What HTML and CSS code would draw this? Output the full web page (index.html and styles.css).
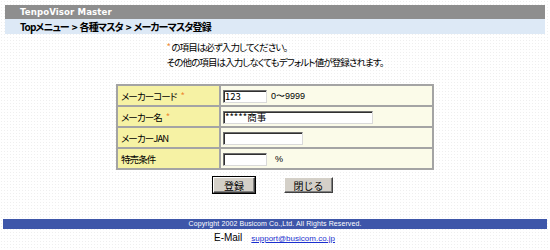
FILE: index.html
```html
<!DOCTYPE html>
<html lang="ja">
<head>
<meta charset="utf-8">
<title>TenpoVisor Master</title>
<link rel="stylesheet" href="styles.css">
</head>
<body>
<div class="page">
  <div class="titlebar">TenpoVisor Master</div>
  <div class="crumbs">Topメニュー &gt; 各種マスタ &gt; メーカーマスタ登録</div>

  <div class="notice">
    <div class="notice-inner">
      <div><span class="req">*</span> の項目は必ず入力してください。</div>
      <div>その他の項目は入力しなくてもデフォルト値が登録されます。</div>
    </div>
  </div>

  <table class="form">
    <tr>
      <th>メーカーコード<span class="req mark">*</span></th>
      <td><input class="in in-s" type="text" value="123"><span class="hint">0〜9999</span></td>
    </tr>
    <tr>
      <th>メーカー名<span class="req mark">*</span></th>
      <td><input class="in in-l" type="text" value="*****商事"></td>
    </tr>
    <tr>
      <th>メーカーJAN</th>
      <td><input class="in in-m" type="text" value=""></td>
    </tr>
    <tr>
      <th>特売条件</th>
      <td><input class="in in-s" type="text" value=""><span class="hint pct">%</span></td>
    </tr>
  </table>

  <div class="buttons">
    <button class="btn btn-default" type="button">登録</button>
    <button class="btn btn-close" type="button">閉じる</button>
  </div>
</div>

<div class="footer">Copyright 2002 Busicom Co.,Ltd. All Rights Reserved.</div>
<div class="mail"><span class="mail-label">E-Mail</span><a class="mail-link" href="#">support@busicom.co.jp</a></div>
</body>
</html>
```

FILE: styles.css
```css
html, body {
  margin: 0;
  padding: 0;
}
body {
  width: 550px;
  height: 250px;
  overflow: hidden;
  background-color: #ffffff;
  background-image: radial-gradient(#efefef 0.7px, transparent 0.9px);
  background-size: 3px 3px;
  font-family: "Noto Sans CJK JP", "Liberation Sans", sans-serif;
  font-feature-settings: "palt";
  color: #000;
}
.page {
  padding: 5px 5px 0 5px;
}
.titlebar {
  height: 14px;
  line-height: 14px;
  background: #8e8e8e;
  color: #ffffff;
  font-family: "DejaVu Sans", sans-serif;
  font-weight: bold;
  font-size: 8.6px;
  padding-left: 15px;
  letter-spacing: 0.1px;
}
.crumbs {
  height: 15px;
  line-height: 15px;
  background: #dde9f6;
  padding-left: 15px;
  font-size: 10px;
  font-weight: bold;
  letter-spacing: -0.9px;
  word-spacing: 1.5px;
}
.notice {
  text-align: center;
  margin-top: 6px;
  font-size: 9.5px;
  letter-spacing: -0.9px;
  line-height: 15px;
}
.notice-inner {
  display: inline-block;
  text-align: left;
}
.req {
  color: #ee8a30;
}
.mark {
  margin-left: 4px;
}
.form {
  border-collapse: collapse;
  width: 318px;
  margin: 14px auto 0 auto;
  border: 2px solid #a4a4a4;
}
.form tr {
  height: 21px;
}
.form th, .form td {
  border: 2px solid #a4a4a4;
  padding: 0 2px;
  font-size: 9.5px;
  text-align: left;
  font-weight: normal;
  vertical-align: middle;
}
.form th {
  width: 96px;
  background: #f6f2a4;
  padding-left: 3px;
  letter-spacing: -0.9px;
}
.form td {
  background: #fbfbe9;
}
.in {
  box-sizing: border-box;
  height: 13px;
  margin: 0;
  padding: 0 1px;
  border: 1px solid;
  border-color: #6e6e6e #dadada #dadada #6e6e6e;
  box-shadow: inset 1px 1px 0 #303030;
  background: #ffffff;
  font-family: "Noto Sans CJK JP", "Liberation Sans", sans-serif;
  font-size: 9.5px;
  line-height: 11px;
  vertical-align: middle;
  color: #000;
}
.in-s { width: 44px; }
.in-m { width: 80px; }
.in-l { width: 150px; }
.hint {
  margin-left: 4px;
  font-family: "Liberation Sans", sans-serif;
  font-size: 9px;
  vertical-align: middle;
}
.pct {
  margin-left: 8px;
}
.buttons {
  display: flex;
  justify-content: center;
  gap: 29px;
  margin-top: 7px;
  padding-right: 4px;
}
.btn {
  box-sizing: border-box;
  height: 16px;
  margin: 0;
  padding: 0;
  background: #d4d0c8;
  border: 1px solid;
  border-color: #ffffff #404040 #404040 #ffffff;
  box-shadow: inset -1px -1px 0 #808080;
  font-family: "Noto Sans CJK JP", sans-serif;
  font-size: 10px;
  line-height: 13px;
  color: #000;
}
.btn-default {
  width: 42px;
  outline: 1px solid #000;
}
.btn-close {
  width: 49px;
}
.footer {
  margin: 26px 3px 0 3px;
  height: 10px;
  line-height: 10px;
  background: #3e56a9;
  color: #ffffff;
  text-align: center;
  font-family: "Liberation Sans", sans-serif;
  font-size: 7px;
  letter-spacing: 0.1px;
}
.mail {
  text-align: center;
  margin-top: 1px;
  padding-right: 1px;
  font-family: "Liberation Sans", sans-serif;
  line-height: 12px;
}
.mail-label {
  font-size: 10px;
  margin-right: 9px;
}
.mail-link {
  font-size: 8px;
  color: #1a2fd0;
  text-decoration: underline;
}
```
